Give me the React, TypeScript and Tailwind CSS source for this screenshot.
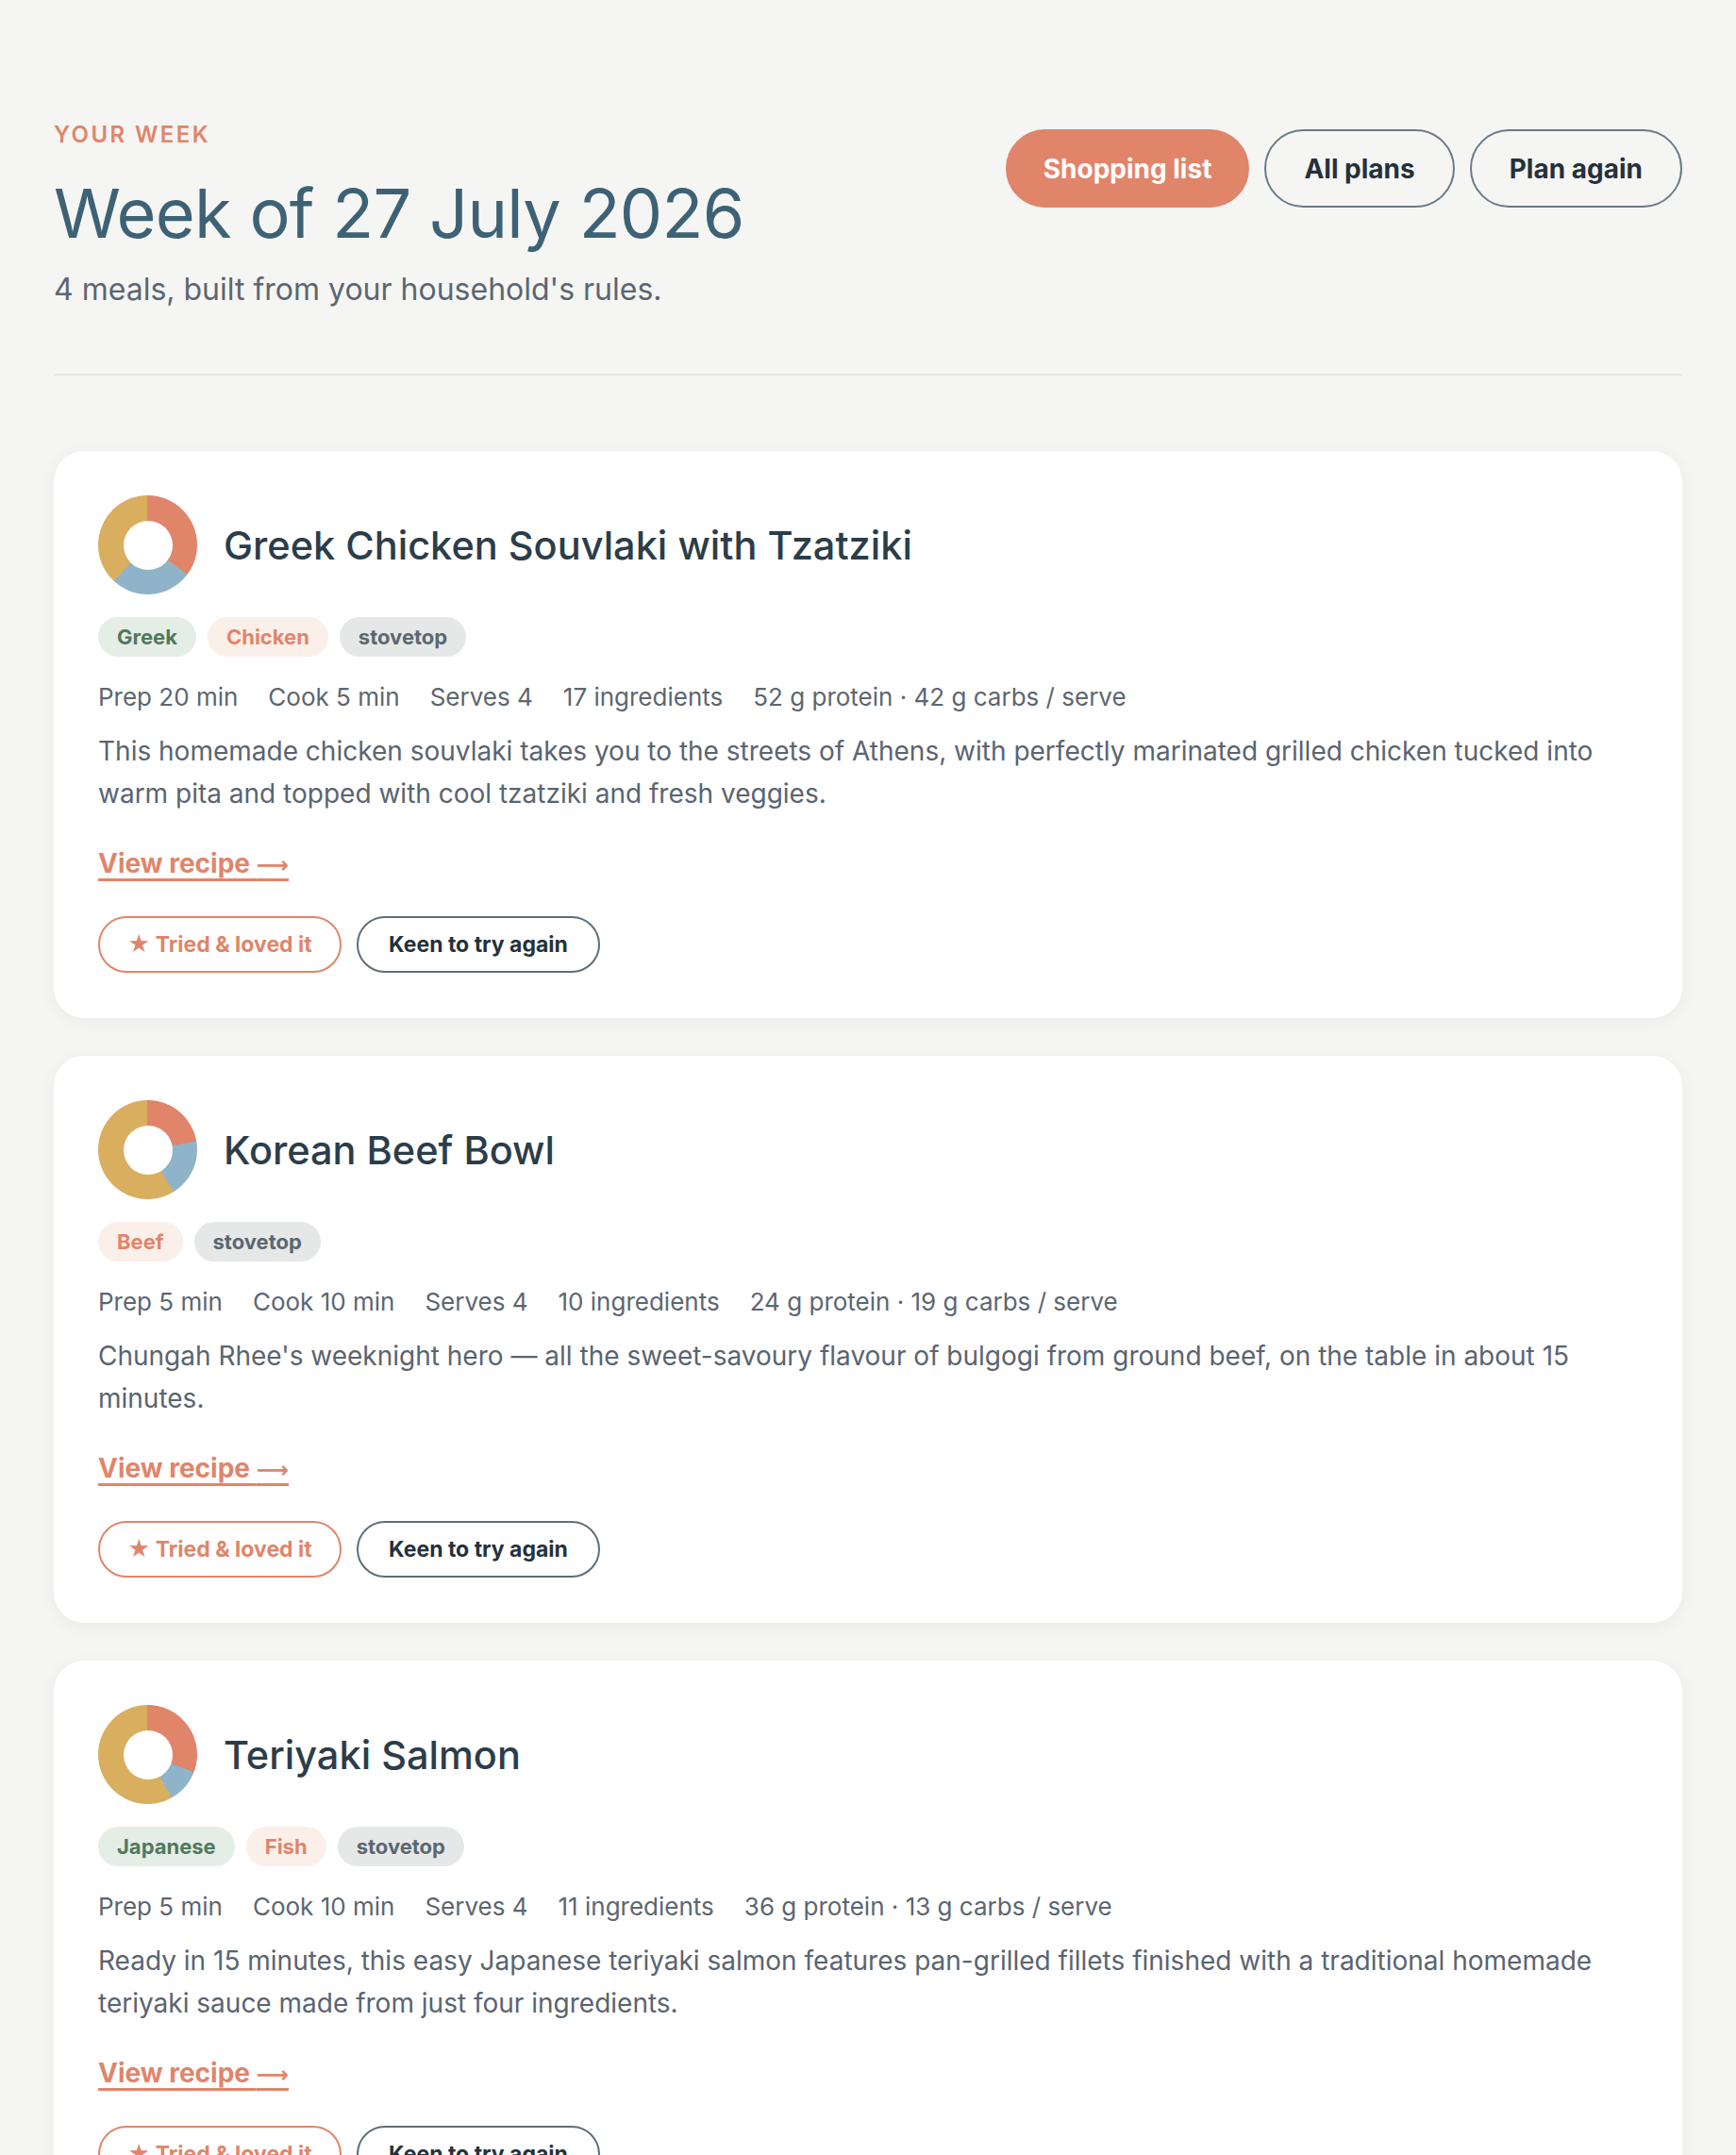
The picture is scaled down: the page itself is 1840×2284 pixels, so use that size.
const meals = [
  {
    title: "Greek Chicken Souvlaki with Tzatziki",
    tags: [
      { label: "Greek", kind: "cuisine" },
      { label: "Chicken", kind: "protein" },
      { label: "stovetop", kind: "method" },
    ],
    meta: ["Prep 20 min", "Cook 5 min", "Serves 4", "17 ingredients", "52 g protein · 42 g carbs / serve"],
    blurb:
      "This homemade chicken souvlaki takes you to the streets of Athens, with perfectly marinated grilled chicken tucked into warm pita and topped with cool tzatziki and fresh veggies.",
    split: [127, 223],
  },
  {
    title: "Korean Beef Bowl",
    tags: [
      { label: "Beef", kind: "protein" },
      { label: "stovetop", kind: "method" },
    ],
    meta: ["Prep 5 min", "Cook 10 min", "Serves 4", "10 ingredients", "24 g protein · 19 g carbs / serve"],
    blurb:
      "Chungah Rhee's weeknight hero — all the sweet-savoury flavour of bulgogi from ground beef, on the table in about 15 minutes.",
    split: [80, 148],
  },
  {
    title: "Teriyaki Salmon",
    tags: [
      { label: "Japanese", kind: "cuisine" },
      { label: "Fish", kind: "protein" },
      { label: "stovetop", kind: "method" },
    ],
    meta: ["Prep 5 min", "Cook 10 min", "Serves 4", "11 ingredients", "36 g protein · 13 g carbs / serve"],
    blurb:
      "Ready in 15 minutes, this easy Japanese teriyaki salmon features pan-grilled fillets finished with a traditional homemade teriyaki sauce made from just four ingredients.",
    split: [111, 151],
  },
];

const tagStyles: Record<string, string> = {
  cuisine: "bg-[#e5ede7] text-[#4f7a5b]",
  protein: "bg-[#fbefea] text-[#e0856a]",
  method: "bg-[#e6e8e7] text-[#5b6770]",
};

function MacroRing({ split }: { split: number[] }) {
  const [a, b] = split;
  return (
    <div
      className="w-[105px] h-[105px] rounded-full shrink-0 flex items-center justify-center"
      style={{
        background: `conic-gradient(#e0856a 0deg ${a}deg, #8fb3c8 ${a}deg ${b}deg, #d9ae5f ${b}deg 360deg)`,
      }}
    >
      <div className="w-[52px] h-[52px] rounded-full bg-white" />
    </div>
  );
}

function MealCard({ meal }: { meal: (typeof meals)[number] }) {
  return (
    <div className="bg-white rounded-[32px] p-[47px] pb-[48px] shadow-[0_4px_18px_rgba(0,0,0,0.05)]">
      <div className="flex items-center gap-x-[28px]">
        <MacroRing split={meal.split} />
        <h2 className="text-[41.5px] leading-[52px] font-medium text-[#2c3d4a]">{meal.title}</h2>
      </div>
      <div className="flex gap-x-[12px] mt-[24px]">
        {meal.tags.map((t) => (
          <span
            key={t.label}
            className={`h-[42px] px-[20px] rounded-full flex items-center text-[22px] font-bold ${tagStyles[t.kind]}`}
          >
            {t.label}
          </span>
        ))}
      </div>
      <div className="flex gap-x-[32px] mt-[24px] text-[26px] leading-[38px] text-[#5c6670]">
        {meal.meta.map((m) => (
          <span key={m}>{m}</span>
        ))}
      </div>
      <p className="mt-[16px] text-[28px] leading-[45px] text-[#5a6470] pr-[40px]">{meal.blurb}</p>
      <a
        href="#"
        className="inline-block mt-[32px] text-[28px] leading-[38px] font-bold text-[#e0856a] underline underline-offset-[6px] decoration-[3px]"
      >
        View recipe <span className="font-['DejaVu_Sans',sans-serif] text-[24px]">⟶</span>
      </a>
      <div className="flex gap-x-[16px] mt-[35px]">
        <button className="h-[60px] w-[258px] rounded-full border-2 border-[#e0856a] text-[#e0856a] text-[23px] font-bold">
          ★ Tried &amp; loved it
        </button>
        <button className="h-[60px] w-[258px] rounded-full border-2 border-[#5f6e78] text-[#24313b] text-[23px] font-bold">
          Keen to try again
        </button>
      </div>
    </div>
  );
}

export default function App() {
  return (
    <div className="min-h-screen bg-[#f5f5f3] font-['Inter',sans-serif] px-[57px] pt-[128px] pb-[80px]">
      <div className="flex justify-between items-start">
        <div>
          <div className="text-[24px] leading-[30px] font-semibold tracking-[0.1em] text-[#e0856a]">YOUR WEEK</div>
          <h1 className="mt-[26px] text-[72px] leading-[84px] text-[#3d6275] tracking-[-0.01em]">
            Week of 27 July 2026
          </h1>
          <p className="mt-[17px] text-[32px] leading-[44px] text-[#5c6670]">4 meals, built from your household's rules.</p>
        </div>
        <div className="flex gap-x-[16px] mt-[9px]">
          <button className="h-[83px] px-[40px] rounded-full bg-[#e0856a] text-white text-[28px] font-bold">
            Shopping list
          </button>
          <button className="h-[83px] px-[40px] rounded-full border-2 border-[#6b7a85] text-[#24313b] text-[28px] font-bold">
            All plans
          </button>
          <button className="h-[83px] px-[40px] rounded-full border-2 border-[#6b7a85] text-[#24313b] text-[28px] font-bold">
            Plan again
          </button>
        </div>
      </div>
      <div className="mt-[67px] border-t-2 border-[#e6e6e3]" />
      <div className="mt-[80px] flex flex-col gap-y-[40px]">
        {meals.map((m) => (
          <MealCard key={m.title} meal={m} />
        ))}
      </div>
    </div>
  );
}
